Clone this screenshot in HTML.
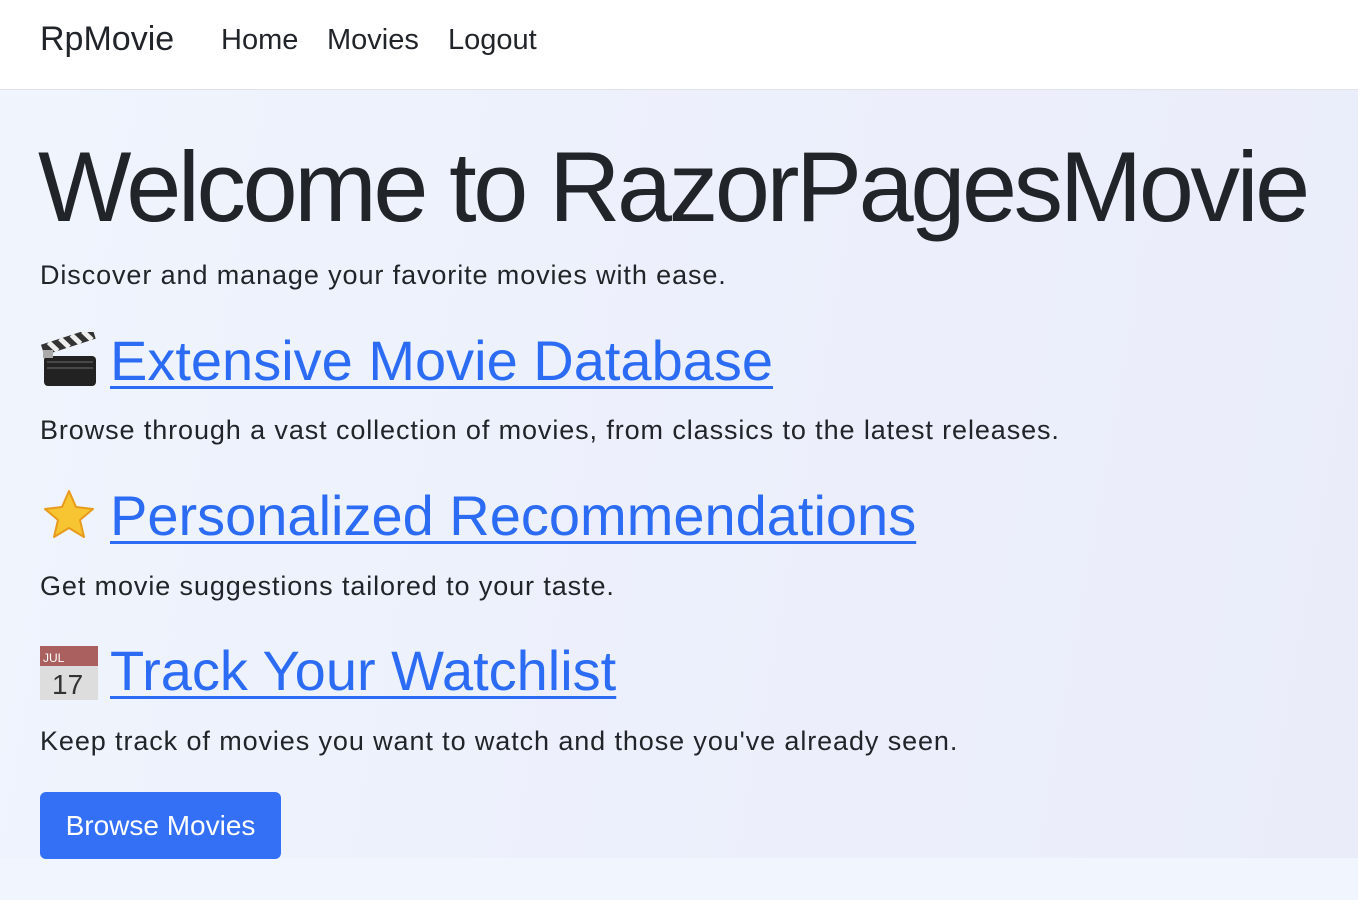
<!DOCTYPE html>
<html><head><meta charset="utf-8"><style>
*{margin:0;padding:0;box-sizing:border-box}
body{width:1358px;height:900px;overflow:hidden;background:#f0f5fe;font-family:"Liberation Sans",sans-serif;color:#212529}
.nav{height:90px;background:#fff;border-bottom:1px solid #dfe2e6;position:relative}
.nav span{position:absolute;top:24px;font-size:29px;color:#212529}
main{position:absolute;top:90px;left:0;width:1358px;height:768px;background:linear-gradient(100deg,#eff4fd,#eaecfa)}
h1{position:absolute;left:38px;top:40px;font-weight:400;font-size:99px;letter-spacing:-3.4px;white-space:nowrap}
p{position:absolute;left:40px;font-size:27px;letter-spacing:0.9px;white-space:nowrap}
.h{position:absolute;left:40px;font-size:56px;white-space:nowrap;display:flex;align-items:center}
.h a{color:#2c6bf3;text-decoration:underline;text-decoration-thickness:3px;text-underline-offset:6px;margin-left:12px}
.btn{position:absolute;left:40px;top:702px;width:241px;height:67px;background:#3370f6;border-radius:6px;color:#fff;font-size:28px;text-align:center;line-height:67px}
</style></head><body>
<div class="nav">
<span style="left:40px;font-size:34px;top:20px">RpMovie</span>
<span style="left:221px">Home</span>
<span style="left:327px">Movies</span>
<span style="left:448px">Logout</span>
</div>
<main>
<h1>Welcome to RazorPagesMovie</h1>
<p style="top:170px">Discover and manage your favorite movies with ease.</p>
<div class="h" style="top:238px"><svg width="58" height="58" viewBox="0 0 58 58"><rect x="4" y="24" width="52" height="30" rx="4" fill="#222"/><path d="M7 30h46M7 36h46" stroke="#555" stroke-width="1.5"/><g transform="rotate(-18 5 22)"><rect x="4" y="12" width="54" height="11" fill="#333"/><path d="M12 12l6 11M24 12l6 11M36 12l6 11M48 12l6 11" stroke="#eee" stroke-width="5"/></g><rect x="3" y="18" width="10" height="8" fill="#aaa"/></svg><a>Extensive Movie Database</a></div>
<p style="top:325px">Browse through a vast collection of movies, from classics to the latest releases.</p>
<div class="h" style="top:393px"><svg width="58" height="58" viewBox="0 0 58 58"><path d="M29 4l7 16 17 2-13 11 4 17-15-9-15 9 4-17L5 22l17-2z" fill="#f7c531" stroke="#e89a1c" stroke-width="2" stroke-linejoin="round"/></svg><a>Personalized Recommendations</a></div>
<p style="top:481px">Get movie suggestions tailored to your taste.</p>
<div class="h" style="top:548px"><svg width="58" height="58" viewBox="0 0 58 58"><rect x="0" y="4" width="58" height="54" fill="#ddd"/><rect x="0" y="4" width="58" height="20" fill="#a9605e"/><text x="3" y="20" font-size="12" fill="#fff" font-family="Liberation Sans">JUL</text><text x="12" y="52" font-size="28" fill="#333" font-family="Liberation Sans">17</text></svg><a>Track Your Watchlist</a></div>
<p style="top:636px">Keep track of movies you want to watch and those you've already seen.</p>
<div class="btn">Browse Movies</div>
</main>
</body></html>
